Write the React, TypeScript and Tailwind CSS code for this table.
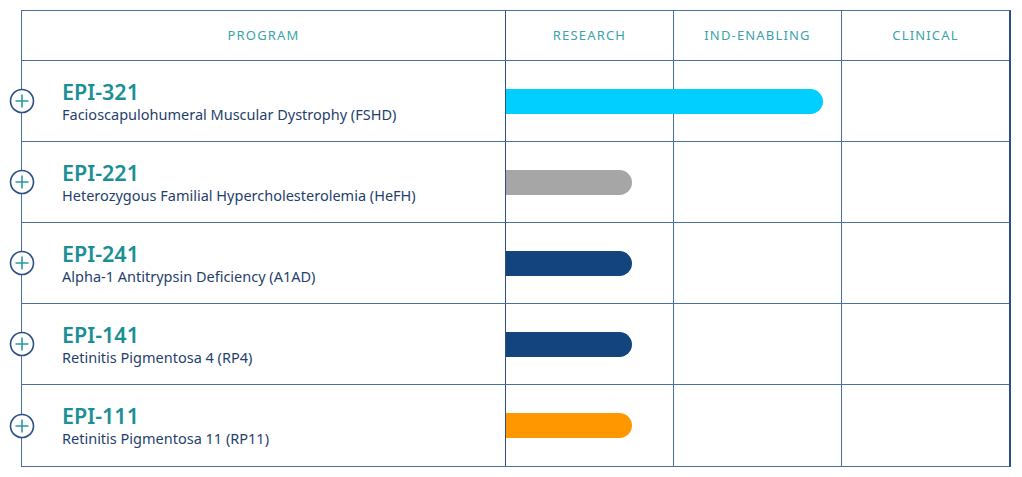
import React from "react";

interface Program {
  code: string;
  name: string;
  color: string;
  width: number;
}

const programs: Program[] = [
  { code: "EPI-321", name: "Facioscapulohumeral Muscular Dystrophy (FSHD)", color: "bg-[#00cfff]", width: 317 },
  { code: "EPI-221", name: "Heterozygous Familial Hypercholesterolemia (HeFH)", color: "bg-[#a6a6a6]", width: 126 },
  { code: "EPI-241", name: "Alpha-1 Antitrypsin Deficiency (A1AD)", color: "bg-[#14447e]", width: 126 },
  { code: "EPI-141", name: "Retinitis Pigmentosa 4 (RP4)", color: "bg-[#14447e]", width: 126 },
  { code: "EPI-111", name: "Retinitis Pigmentosa 11 (RP11)", color: "bg-[#ff9800]", width: 126 },
];

const stages = ["RESEARCH", "IND-ENABLING", "CLINICAL"];

function PlusCircle() {
  return (
    <svg width="26" height="26" viewBox="0 0 26 26" className="absolute left-[-13px] top-1/2 -translate-y-1/2">
      <circle cx="13" cy="13" r="11.5" fill="white" stroke="#2b4f86" strokeWidth="1.6" />
      <path d="M13 6.5v13M6.5 13h13" stroke="#2a9aa0" strokeWidth="1.6" />
    </svg>
  );
}

export default function App() {
  return (
    <div className="w-[1022px] h-[477px] bg-white pt-[10px] pl-[21px] font-['Noto_Sans',sans-serif]">
      <div className="w-[990px] border border-[#4a6fa5] border-r-2 border-r-[#2b4f86]">
        <div className="grid grid-cols-[483px_168px_168px_1fr] h-[50px] border-b border-[#4a6fa5]">
          <div className="flex items-center justify-center text-[13px] tracking-[0.09em] text-[#3aa3ad]">
            PROGRAM
          </div>
          {stages.map((s, i) => (
            <div
              key={s}
              className={
                "flex items-center justify-center text-[13px] tracking-[0.09em] text-[#3aa3ad] " +
                (i === 0 ? "border-l-[1.5px] border-[#2b4f86]" : "border-l border-[#4a6fa5]")
              }
            >
              {s}
            </div>
          ))}
        </div>
        {programs.map((p, idx) => (
          <div
            key={p.code}
            className={
              "grid grid-cols-[483px_168px_168px_1fr] h-[81px] " +
              (idx < programs.length - 1 ? "border-b border-[#4a6fa5]" : "")
            }
          >
            <div className="relative flex flex-col justify-center pl-[40px]">
              <PlusCircle />
              <div className="text-[21.5px] leading-[25px] font-semibold text-[#1a8f96]">{p.code}</div>
              <div className="text-[14.5px] leading-[20px] text-[#1f3f6d]">{p.name}</div>
            </div>
            <div className="relative flex items-center border-l-[1.5px] border-[#2b4f86]">
              <div
                className={"absolute left-0 h-[25px] rounded-r-full z-10 " + p.color}
                style={{ width: p.width }}
              />
            </div>
            <div className="border-l border-[#4a6fa5]" />
            <div className="border-l border-[#4a6fa5]" />
          </div>
        ))}
      </div>
    </div>
  );
}
